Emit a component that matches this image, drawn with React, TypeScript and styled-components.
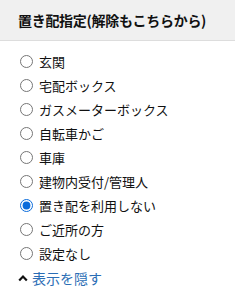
import React, { useState } from 'react';
import styled, { createGlobalStyle } from 'styled-components';

const GlobalStyle = createGlobalStyle`
  html, body {
    margin: 0;
    padding: 0;
    background: #ffffff;
  }
  body {
    font-family: "Noto Sans CJK JP", "Liberation Sans", sans-serif;
    color: #111111;
  }
`;

const options = [
  '玄関',
  '宅配ボックス',
  'ガスメーターボックス',
  '自転車かご',
  '車庫',
  '建物内受付/管理人',
  '置き配を利用しない',
  'ご近所の方',
  '設定なし',
];

const App: React.FC = () => {
  const [selected, setSelected] = useState('置き配を利用しない');

  return (
    <>
      <GlobalStyle />
      <Panel>
        <Header>置き配指定(解除もこちらから)</Header>
        <OptionList>
          {options.map(label => (
            <OptionRow key={label}>
              <Radio
                type="radio"
                name="okihai"
                checked={selected === label}
                onChange={() => setSelected(label)}
              />
              <OptionLabel>{label}</OptionLabel>
            </OptionRow>
          ))}
        </OptionList>
        <ToggleLink href="#">
          <svg width="10" height="8" viewBox="0 0 10 8">
            <path d="M1.2 6.5 L5 2.5 L8.8 6.5" fill="none" stroke="#111" strokeWidth="2.2" />
          </svg>
          <span>表示を隠す</span>
        </ToggleLink>
      </Panel>
    </>
  );
};

export default App;

const Panel = styled.div`
  width: 235px;
  height: 289px;
  overflow: hidden;
`;

const Header = styled.div`
  height: 40px;
  background: #f0f0f0;
  border-bottom: 1px solid #dddddd;
  padding-left: 18px;
  display: flex;
  align-items: center;
  font-size: 14px;
  font-weight: 700;
  letter-spacing: -0.3px;
  color: #111111;
`;

const OptionList = styled.div`
  display: flex;
  flex-direction: column;
  padding-top: 8px;
`;

const OptionRow = styled.label`
  display: flex;
  align-items: center;
  height: 24px;
  padding-left: 20px;
  font-size: 13px;
  cursor: pointer;
`;

const Radio = styled.input`
  width: 13px;
  height: 13px;
  margin: 0 6px 0 0;
  accent-color: #0b6cdb;
`;

const OptionLabel = styled.span`
  line-height: 1;
`;

const ToggleLink = styled.a`
  display: flex;
  align-items: center;
  gap: 4px;
  height: 18px;
  margin-top: 4px;
  padding-left: 18px;
  font-size: 14px;
  line-height: 18px;
  color: #2a6db5;
  text-decoration: none;
`;
